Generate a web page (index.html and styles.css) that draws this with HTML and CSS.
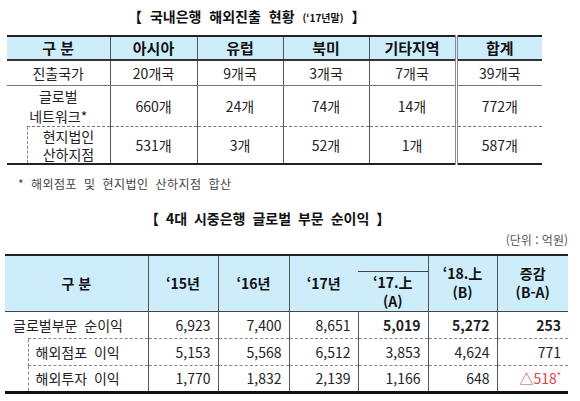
FILE: index.html
```html
<!DOCTYPE html>
<html lang="ko">
<head>
    <meta charset="UTF-8">
    <title>국내은행 해외진출 현황</title>
    <link rel="stylesheet" href="styles.css">
</head>
<body>
<div class="title1">【 국내은행 해외진출 현황 <span class="small">(‘17년말)</span> 】</div>

<table class="t1">
    <colgroup>
        <col style="width:20px">
        <col style="width:83px">
        <col style="width:87px">
        <col style="width:86px">
        <col style="width:86px">
        <col style="width:87px">
        <col style="width:86px">
    </colgroup>
    <tr class="head">
        <th colspan="2">구 분</th>
        <th>아시아</th>
        <th>유럽</th>
        <th>북미</th>
        <th>기타지역</th>
        <th class="sum">합계</th>
    </tr>
    <tr class="r1">
        <td colspan="2">진출국가</td>
        <td>20개국</td>
        <td>9개국</td>
        <td>3개국</td>
        <td>7개국</td>
        <td class="sum">39개국</td>
    </tr>
    <tr class="r2">
        <td colspan="2" class="two">글로벌<br>네트워크*</td>
        <td>660개</td>
        <td>24개</td>
        <td>74개</td>
        <td>14개</td>
        <td class="sum">772개</td>
    </tr>
    <tr class="r3">
        <td class="indent"></td>
        <td class="two sub">현지법인<br>산하지점</td>
        <td>531개</td>
        <td>3개</td>
        <td>52개</td>
        <td>1개</td>
        <td class="sum">587개</td>
    </tr>
</table>

<div class="note">* 해외점포 및 현지법인 산하지점 합산</div>

<div class="title2">【 4대 시중은행 글로벌 부문 순이익 】</div>
<div class="unit">(단위 : 억원)</div>

<table class="t2">
    <colgroup>
        <col style="width:23px">
        <col style="width:120px">
        <col style="width:70px">
        <col style="width:71px">
        <col style="width:69px">
        <col style="width:70px">
        <col style="width:69px">
        <col style="width:71px">
    </colgroup>
    <tr class="ha">
        <th colspan="2" rowspan="2">구 분</th>
        <th rowspan="2">‘15년</th>
        <th rowspan="2">‘16년</th>
        <th rowspan="2" class="y17">‘17년</th>
        <th class="blank"></th>
        <th rowspan="2" class="two">‘18.上<br>(B)</th>
        <th rowspan="2" class="two">증감<br>(B-A)</th>
    </tr>
    <tr class="hb">
        <th class="h17a">‘17.上<br>(A)</th>
    </tr>
    <tr class="d1">
        <td colspan="2" class="label">글로벌부문 순이익</td>
        <td>6,923</td>
        <td>7,400</td>
        <td>8,651</td>
        <td class="b">5,019</td>
        <td class="b">5,272</td>
        <td class="b">253</td>
    </tr>
    <tr class="d2">
        <td class="indent"></td>
        <td class="label sub">해외점포 이익</td>
        <td>5,153</td>
        <td>5,568</td>
        <td>6,512</td>
        <td>3,853</td>
        <td>4,624</td>
        <td>771</td>
    </tr>
    <tr class="d3">
        <td class="indent"></td>
        <td class="label sub">해외투자 이익</td>
        <td>1,770</td>
        <td>1,832</td>
        <td>2,139</td>
        <td>1,166</td>
        <td>648</td>
        <td class="red">△518<sup>*</sup></td>
    </tr>
</table>
</body>
</html>
```

FILE: styles.css
```css
body {
    margin: 0;
    background: #ffffff;
    color: #222222;
    font-family: "Noto Sans CJK KR", "Noto Sans", sans-serif;
}

.title1 {
    height: 35px;
    line-height: 32px;
    padding-left: 128px;
    font-size: 14px;
    font-weight: bold;
    word-spacing: 4px;
    color: #111111;
}

.title1 .small {
    font-size: 10px;
    word-spacing: 0;
}

/* 첫번째 표 */
.t1 {
    border-collapse: collapse;
    table-layout: fixed;
    width: 535px;
    margin-left: 7px;
    border-top: 2px solid #222222;
    border-bottom: 2px solid #222222;
    font-size: 14px;
}

.t1 th,
.t1 td {
    padding: 0;
    text-align: center;
    border-left: 1px solid #555555;
    border-right: 1px solid #555555;
    line-height: 18px;
}

.t1 .r2 .two {
    line-height: 20px;
}

.t1 tr > :first-child {
    border-left: none;
}

.t1 tr > :last-child {
    border-right: none;
}

.t1 th {
    background: #cdedfb;
    font-size: 15px;
    border-bottom: 2px solid #333333;
    color: #111111;
}

.t1 .sum {
    border-left: 3px double #8a8a8a;
}

.t1 .head {
    height: 24px;
}

.t1 .r1 {
    height: 25px;
}

.t1 .r1 td {
    border-bottom: 1px solid #777777;
}

.t1 .r2 {
    height: 40px;
}

.t1 .r2 td {
    border-bottom: 1px dashed #777777;
}

.t1 .r3 {
    height: 38px;
}

.t1 .indent {
    border-top: hidden;
    border-right: none;
}

.t1 .sub {
    border-left: 1px dashed #888888;
}

.note {
    height: 38px;
    line-height: 38px;
    padding-left: 18px;
    font-size: 12px;
    color: #444444;
    letter-spacing: 0.5px;
    word-spacing: 3px;
}

.title2 {
    height: 30px;
    line-height: 30px;
    padding-left: 145px;
    font-size: 14px;
    font-weight: bold;
    word-spacing: 3px;
    color: #111111;
}

.unit {
    height: 21px;
    line-height: 13px;
    text-align: right;
    padding-right: 12px;
    font-size: 12px;
    color: #555555;
}

/* 두번째 표 */
.t2 {
    border-collapse: collapse;
    table-layout: fixed;
    width: 563px;
    margin-left: 5px;
    border-top: 2px solid #222222;
    border-bottom: 3px solid #111111;
    font-size: 14px;
}

.t2 th,
.t2 td {
    padding: 0;
    border-left: 1px solid #555555;
    border-right: 1px solid #555555;
}

.t2 tr > :first-child {
    border-left: none;
}

.t2 tr > :last-child {
    border-right: none;
}

.t2 th {
    background: #cdedfb;
    font-weight: bold;
    text-align: center;
    line-height: 19px;
    color: #111111;
}

.t2 .ha {
    height: 16px;
}

.t2 .hb {
    height: 38px;
}

.t2 .hb th,
.t2 .ha th {
    border-bottom: 1px solid #444444;
}

.t2 .y17 {
    border-right: none;
}

.t2 .blank {
    border-left: none;
    border-bottom: 1px solid #444444;
    line-height: 0;
}

.t2 .h17a {
    border-left: 1px solid #444444;
    vertical-align: top;
    padding-top: 1px;
    line-height: 19px;
}

.t2 tr.d1,
.t2 tr.d2,
.t2 tr.d3 {
    height: 27px;
}

.t2 td {
    text-align: right;
    padding-right: 7px;
    line-height: 20px;
}

.t2 .d1 td {
    border-bottom: 1px dashed #888888;
}

.t2 .d2 td {
    border-bottom: 1px dashed #888888;
}

.t2 .label {
    text-align: left;
    padding-left: 8px;
    padding-right: 0;
    word-spacing: 3px;
}

.t2 .sub {
    padding-left: 7px;
    border-left: 1px dashed #888888;
}

.t2 .indent {
    border-top: hidden;
    border-right: none;
    border-bottom: none;
    padding: 0;
}

.t2 .b {
    font-weight: bold;
}

.t2 .red {
    color: #d8454a;
}

.t2 .red sup {
    font-size: 9px;
    vertical-align: 5px;
    line-height: 0;
}
```
